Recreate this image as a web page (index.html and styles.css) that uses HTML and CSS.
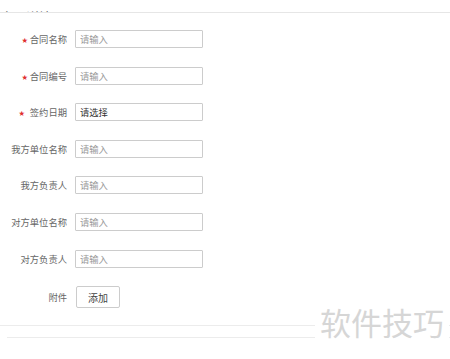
FILE: index.html
```html
<!DOCTYPE html>
<html lang="zh">
<head>
    <meta charset="UTF-8">
    <title>合同详情</title>
    <link rel="stylesheet" href="styles.css">
</head>
<body>

    <!-- top bar, mostly scrolled out of view -->
    <div class="top-bar">
        <span class="top-title">合同详情</span>
        <span class="top-num">23</span>
    </div>

    <div class="contract-form">
        <div class="row">
            <label class="label"><span class="star">★</span>合同名称</label>
            <input class="field" type="text" placeholder="请输入">
        </div>
        <div class="row">
            <label class="label"><span class="star">★</span>合同编号</label>
            <input class="field" type="text" placeholder="请输入">
        </div>
        <div class="row">
            <label class="label"><span class="star star-wide">★</span>签约日期</label>
            <input class="field field-select" type="text" value="请选择">
        </div>
        <div class="row">
            <label class="label">我方单位名称</label>
            <input class="field" type="text" placeholder="请输入">
        </div>
        <div class="row">
            <label class="label">我方负责人</label>
            <input class="field" type="text" placeholder="请输入">
        </div>
        <div class="row">
            <label class="label">对方单位名称</label>
            <input class="field" type="text" placeholder="请输入">
        </div>
        <div class="row">
            <label class="label">对方负责人</label>
            <input class="field" type="text" placeholder="请输入">
        </div>
        <div class="row row-file">
            <label class="label">附件</label>
            <button class="add-btn">添加</button>
        </div>
    </div>

    <div class="line"></div>
    <div class="line line-inset"></div>

    <div class="watermark">软件技巧</div>

</body>
</html>
```

FILE: styles.css
```css
body {
    margin: 0;
    background: #fff;
    font-family: "Noto Sans CJK SC", "Noto Sans", sans-serif;
    color: #555;
    position: relative;
    height: 359px;
    overflow: hidden;
}
.top-bar {
    height: 12px;
    border-bottom: 1px solid #e6e6e6;
    display: flex;
    justify-content: space-between;
    align-items: flex-end;
    overflow: hidden;
    font-size: 13px;
    color: #666;
}
.top-title, .top-num {
    line-height: 14px;
    margin-bottom: -12px;
}
.top-num {
    margin-right: -3px;
}
.contract-form {
    padding-top: 17px;
    display: flex;
    flex-direction: column;
    gap: 18.6px;
}
.row {
    display: flex;
    align-items: center;
    gap: 8px;
}
.label {
    width: 67px;
    text-align: right;
    font-size: 9.3px;
    color: #666;
    white-space: nowrap;
}
.star {
    color: #e03030;
    font-size: 6px;
    margin-right: 2px;
    vertical-align: 1px;
}
.star-wide {
    margin-right: 5px;
}
.field {
    box-sizing: border-box;
    width: 128px;
    height: 18px;
    margin: 0;
    padding: 0 4px;
    border: 1px solid #cccccc;
    border-radius: 1px;
    font-family: inherit;
    font-size: 9.3px;
    color: #333;
    outline: none;
}
.field::placeholder {
    color: #999;
}
.add-btn {
    box-sizing: border-box;
    width: 44px;
    height: 22px;
    margin-left: 1px;
    padding: 0;
    border: 1px solid #cccccc;
    border-radius: 2px;
    background: #fff;
    font-family: inherit;
    font-size: 10px;
    color: #444;
}
.line {
    height: 1px;
    background: #ececec;
    margin-top: 17px;
}
.line-inset {
    margin-top: 11px;
    margin-left: 7px;
}
.watermark {
    position: absolute;
    left: 315px;
    top: 300px;
    padding: 0 5px;
    background: #fff;
    font-size: 31px;
    line-height: 44px;
    color: #d6d6d6;
}
```
